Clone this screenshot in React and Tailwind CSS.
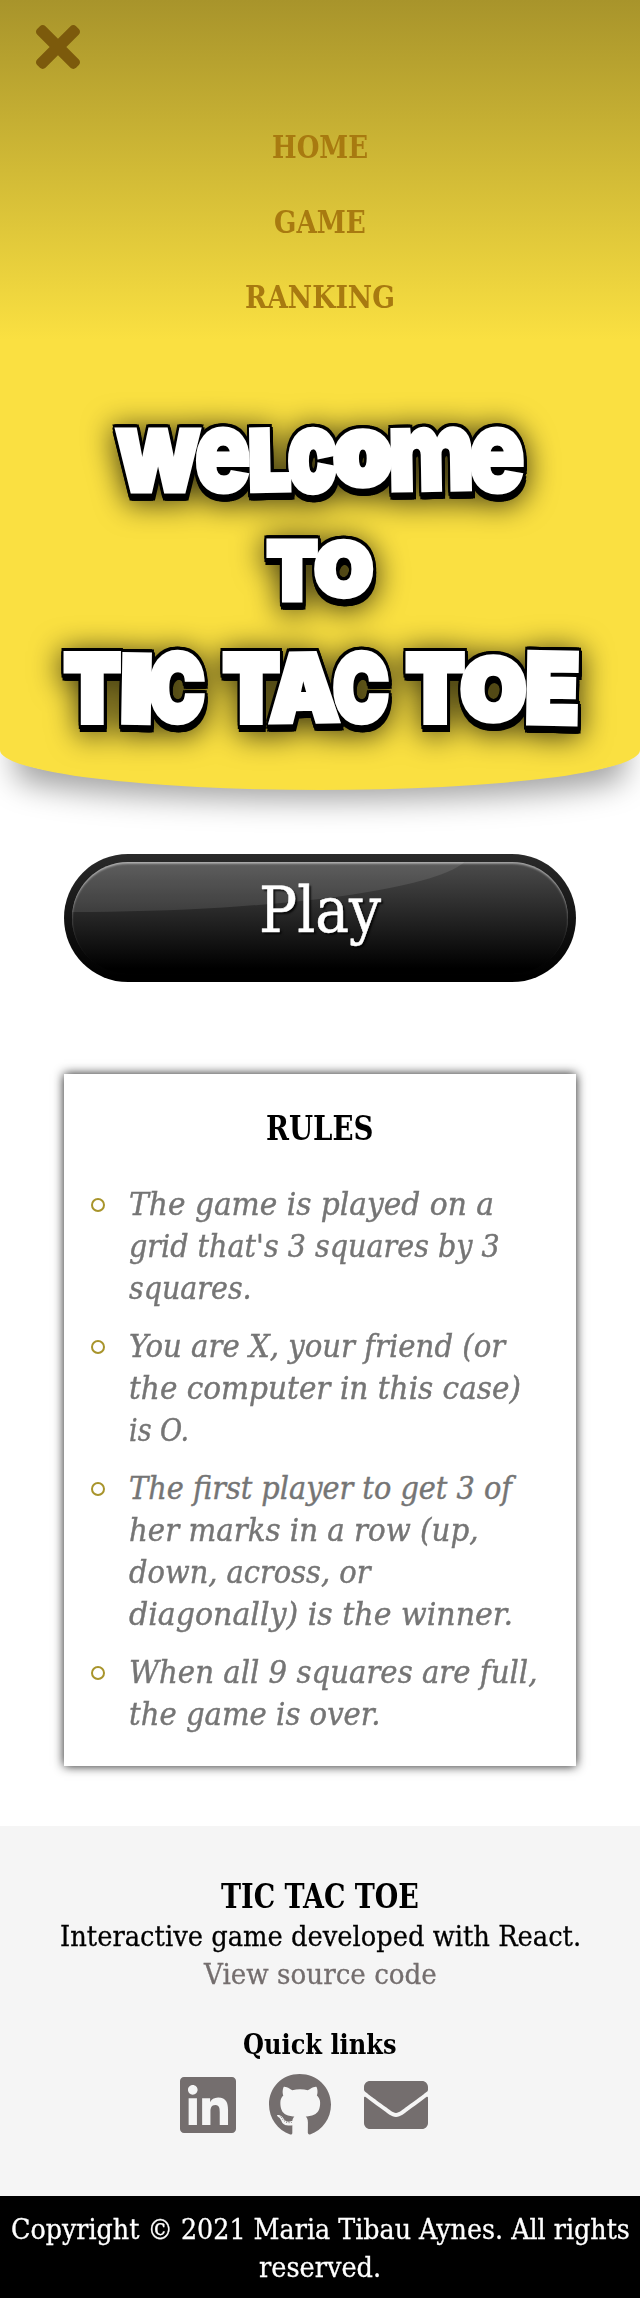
import React, { useLayoutEffect, useRef, useState } from "react";
import { FaTimes, FaLinkedin, FaGithub, FaEnvelope } from "react-icons/fa";

// One line of text condensed or widened horizontally to a given width.
function Fit({ w, children, className = "" }) {
  const ref = useRef(null);
  const [k, setK] = useState(1);
  useLayoutEffect(() => {
    if (ref.current) setK(w / ref.current.offsetWidth);
  }, [w]);
  return (
    <span className={"block whitespace-nowrap " + className} style={{ width: w }}>
      <span ref={ref} className="inline-block origin-left" style={{ transform: `scaleX(${k})` }}>
        {children}
      </span>
    </span>
  );
}

const FONT = "900 100px Inter";
const STROKES = { W: 6, e: 2.5, L: 10, c: 6, o: 8, m: 4, T: 9, I: 6, C: 7, A: 6, O: 9, E: 8 };
let ctx;
function ink(ch) {
  ctx = ctx || document.createElement("canvas").getContext("2d");
  ctx.font = FONT;
  const m = ctx.measureText(ch);
  const s = STROKES[ch] / 2;
  return {
    l: -m.actualBoundingBoxLeft - s,
    r: m.actualBoundingBoxRight + s,
    t: -m.actualBoundingBoxAscent - s,
    b: m.actualBoundingBoxDescent + s,
  };
}

// [letter, left, right, top, bottom, rotation]
const WORDMARK = [
  [
    ["W", 115, 201, 428, 494, 0],
    ["e", 196, 250, 427, 495, 0],
    ["L", 249, 291, 427, 493, -1],
    ["c", 288, 337, 427, 495, 0],
    ["o", 333, 393, 429, 489, 0],
    ["m", 390, 472, 427, 492, -1],
    ["e", 470, 524, 427, 495, 0],
  ],
  [
    ["T", 266, 318, 539, 603, 0],
    ["O", 314, 374, 539, 599, 0],
  ],
  [
    ["T", 63, 121, 651, 725, 0],
    ["I", 121, 152, 652, 725, 1],
    ["C", 149, 205, 649, 725, 0],
    [" "],
    ["T", 222, 280, 651, 725, 0],
    ["A", 268, 340, 651, 724, -1],
    ["C", 333, 389, 649, 725, 0],
    [" "],
    ["T", 405, 465, 651, 725, 0],
    ["O", 460, 527, 655, 724, 0],
    ["E", 526, 579, 650, 726, 1],
  ],
];

function Glyph({ g }) {
  const [ch, x0, x1, y0, y1, rot] = g;
  if (ch === " ") return <text> </text>;
  const i = ink(ch);
  const sx = (x1 - x0) / (i.r - i.l);
  const sy = (y1 - y0) / (i.b - i.t);
  return (
    <text
      transform={`rotate(${rot} ${(x0 + x1) / 2} ${(y0 + y1) / 2}) translate(${x0 - i.l * sx} ${y0 - i.t * sy}) scale(${sx} ${sy})`}
      strokeWidth={STROKES[ch]}
      strokeLinejoin="miter"
    >
      {ch}
    </text>
  );
}

function Wordmark() {
  return (
    <h1>
      <svg
        viewBox="0 340 640 450"
        className="block h-[450px] w-[640px] overflow-visible fill-white stroke-white font-['Inter',sans-serif] text-[100px] font-black [filter:drop-shadow(2px_0_0_#000)_drop-shadow(-2px_0_0_#000)_drop-shadow(0_-2.5px_0_#000)_drop-shadow(1px_3px_0_#000)_drop-shadow(0_4px_0_#000)_drop-shadow(0_3px_15px_rgba(0,0,0,0.75))]"
      >
        {WORDMARK.map((line, n) => (
          <g key={n}>
            {line.map((g, k) => (
              <Glyph key={k} g={g} />
            ))}
          </g>
        ))}
      </svg>
    </h1>
  );
}

const RULES = [
  [
    ["The game is played on a", 365],
    ["grid that's 3 squares by 3", 371],
    ["squares.", 123],
  ],
  [
    ["You are X, your friend (or", 376],
    ["the computer in this case)", 392],
    ["is O.", 60],
  ],
  [
    ["The first player to get 3 of", 383],
    ["her marks in a row (up,", 349],
    ["down, across, or", 242],
    ["diagonally) is the winner.", 384],
  ],
  [
    ["When all 9 squares are full,", 408],
    ["the game is over.", 251],
  ],
];

export default function App() {
  return (
    <div className="w-[640px] bg-white font-['DejaVu_Serif_Condensed','DejaVu_Serif',serif] text-black">
      <header className="h-[790px] rounded-b-[50%_40px] bg-[#fae041] shadow-[0_25px_30px_-15px_rgba(0,0,0,0.36)]">
        <nav className="h-[340px] bg-[linear-gradient(#a8942b,#fae041)]">
          <button className="block pt-[15px] pl-[26px] text-[#7c5a0c]">
            <FaTimes className="size-16" />
          </button>
          <ul className="flex flex-col items-center gap-[33px] pt-[47px] text-[32px] leading-[42px] font-bold text-[#a87a10]">
            <li><Fit w={96}>HOME</Fit></li>
            <li><Fit w={92}>GAME</Fit></li>
            <li><Fit w={150}>RANKING</Fit></li>
          </ul>
        </nav>
        <Wordmark />
      </header>

      <main className="px-16 pt-16">
        <button className="block h-32 w-[512px] rounded-full bg-[linear-gradient(#2a2a2a,#000_95%)] p-2">
          <span className="relative flex h-28 w-full items-center justify-center overflow-hidden rounded-full bg-[linear-gradient(#4c4c4c,#000_95%)] pb-[15px] text-[63px] leading-[80px] text-white shadow-[inset_0_2px_2px_rgba(255,255,255,0.4),inset_0_1px_1px_rgba(255,255,255,0.15)]">
            <span className="absolute -top-[70px] -left-[402px] h-[120px] w-[800px] rounded-[50%] bg-white/10" />
            <Fit w={122} className="relative [-webkit-text-stroke:0.5px_#fff] [text-shadow:2px_2px_2px_rgba(0,0,0,0.8)]">Play</Fit>
          </span>
        </button>

        <section className="mt-[92px] h-[692px] bg-white pt-[34px] shadow-[0_0_10px_rgba(0,0,0,0.9)]">
          <h2 className="flex justify-center text-[33px] leading-[42px] font-bold">
            <Fit w={108}>RULES</Fit>
          </h2>
          <ul className="flex flex-col gap-4 pt-[33px] pl-[27px] text-[32px] leading-[42px] text-[#757575] italic [-webkit-text-stroke:0.4px_#757575]">
            {RULES.map((lines, n) => (
              <li key={n} className="flex gap-6">
                <span className="mt-[15px] size-3.5 shrink-0 rounded-full border-2 border-[#a8942b]" />
                <span>
                  {lines.map(([t, w]) => (
                    <Fit key={t} w={w}>{t}</Fit>
                  ))}
                </span>
              </li>
            ))}
          </ul>
        </section>
      </main>

      <footer className="mt-[60px]">
        <div className="flex h-[370px] flex-col items-center bg-[#f5f5f5] pt-[50px] text-[28px] leading-[37px]">
          <h3 className="text-[33px] leading-[42px] font-bold"><Fit w={198}>TIC TAC TOE</Fit></h3>
          <p className="[-webkit-text-stroke:0.3px_#000]"><Fit w={521}>Interactive game developed with React.</Fit></p>
          <a className="pt-px text-[#746e6e] [-webkit-text-stroke:0.3px_#746e6e]"><Fit w={233}>View source code</Fit></a>
          <h4 className="mt-[33px] font-bold"><Fit w={154}>Quick links</Fit></h4>
          <div className="mt-2.5 flex w-full gap-[33px] pl-[180px] text-[#746e6e]">
            <FaLinkedin className="h-16 w-14" />
            <FaGithub className="h-16 w-[62px]" />
            <FaEnvelope className="size-16" />
          </div>
        </div>
        <div className="flex h-[102px] flex-col items-center bg-black pt-[15px] text-[28px] leading-[38px] text-white [-webkit-text-stroke:0.3px_#fff]">
          <Fit w={619}>Copyright © 2021 Maria Tibau Aynes. All rights</Fit>
          <Fit w={122}>reserved.</Fit>
        </div>
      </footer>
    </div>
  );
}
